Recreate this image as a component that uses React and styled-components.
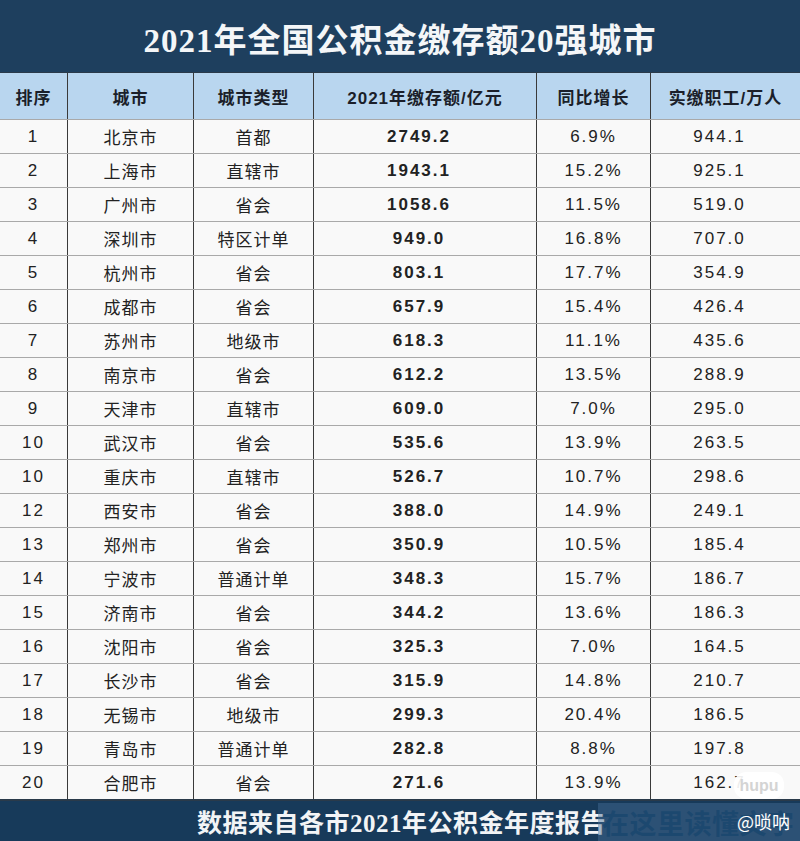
import React from 'react';
import styled, { createGlobalStyle } from 'styled-components';

const rows = [
  ['1', '北京市', '首都', '2749.2', '6.9%', '944.1'],
  ['2', '上海市', '直辖市', '1943.1', '15.2%', '925.1'],
  ['3', '广州市', '省会', '1058.6', '11.5%', '519.0'],
  ['4', '深圳市', '特区计单', '949.0', '16.8%', '707.0'],
  ['5', '杭州市', '省会', '803.1', '17.7%', '354.9'],
  ['6', '成都市', '省会', '657.9', '15.4%', '426.4'],
  ['7', '苏州市', '地级市', '618.3', '11.1%', '435.6'],
  ['8', '南京市', '省会', '612.2', '13.5%', '288.9'],
  ['9', '天津市', '直辖市', '609.0', '7.0%', '295.0'],
  ['10', '武汉市', '省会', '535.6', '13.9%', '263.5'],
  ['10', '重庆市', '直辖市', '526.7', '10.7%', '298.6'],
  ['12', '西安市', '省会', '388.0', '14.9%', '249.1'],
  ['13', '郑州市', '省会', '350.9', '10.5%', '185.4'],
  ['14', '宁波市', '普通计单', '348.3', '15.7%', '186.7'],
  ['15', '济南市', '省会', '344.2', '13.6%', '186.3'],
  ['16', '沈阳市', '省会', '325.3', '7.0%', '164.5'],
  ['17', '长沙市', '省会', '315.9', '14.8%', '210.7'],
  ['18', '无锡市', '地级市', '299.3', '20.4%', '186.5'],
  ['19', '青岛市', '普通计单', '282.8', '8.8%', '197.8'],
  ['20', '合肥市', '省会', '271.6', '13.9%', '162.7'],
];

const heads = ['排序', '城市', '城市类型', '2021年缴存额/亿元', '同比增长', '实缴职工/万人'];

const Global = createGlobalStyle`
  body {
    margin: 0;
    background: #fff;
    font-family: "Liberation Sans", "Noto Sans CJK SC", sans-serif;
  }
`;

const Page = styled.div`
  width: 800px;
  height: 841px;
  display: flex;
  flex-direction: column;
  overflow: hidden;
`;

const Title = styled.div`
  height: 72px;
  background: #1e3f5e;
  color: #f4f6f8;
  display: flex;
  align-items: center;
  justify-content: center;
  font-family: "Liberation Serif", "Noto Sans CJK SC", serif;
  font-size: 33px;
  font-weight: 700;
  letter-spacing: 1px;
  padding-top: 4px;
  box-sizing: border-box;
`;

const Row = styled.div`
  display: grid;
  grid-template-columns: 67px 126px 120px 223px 114px 150px;
  height: ${p => (p.$head ? 47 : 34)}px;
  background: ${p => (p.$head ? '#b9d6ef' : '#f9f9f9')};
  border-top: 1px solid ${p => (p.$head ? '#2a3a4a' : '#a9a9a9')};
  box-sizing: border-box;
`;

const Cell = styled.div`
  display: flex;
  align-items: center;
  justify-content: center;
  border-left: ${p => (p.$first ? 'none' : '1.5px solid #3a3a3a')};
  font-size: 17px;
  font-weight: ${p => (p.$bold ? 700 : 400)};
  color: ${p => (p.$head ? '#1b1f2a' : '#222')};
  letter-spacing: ${p => (p.$num ? '2px' : '1px')};
  padding-right: ${p => p.$shift || 0}px;
`;

const Footer = styled.div`
  position: relative;
  flex: 1;
  background: #173a5a;
  border-top: 2px solid #2a3a4a;
  display: flex;
  align-items: center;
  padding-left: 197px;
  font-family: "Liberation Serif", "Noto Sans CJK SC", serif;
  font-size: 25px;
  font-weight: 700;
  color: #f2f4f6;
  letter-spacing: 0.5px;
`;

const Stamp = styled.div`
  position: absolute;
  left: 598px;
  top: 2px;
  right: 0;
  bottom: 0;
  background: rgba(70, 110, 150, 0.45);
  display: flex;
  align-items: center;
  padding-left: 4px;
  font-family: "Noto Sans CJK SC", sans-serif;
  font-size: 27px;
  font-weight: 700;
  color: rgba(24, 70, 110, 0.8);
  white-space: nowrap;
`;

const Handle = styled.div`
  position: absolute;
  right: 10px;
  top: 50%;
  transform: translateY(-50%);
  font-family: "Noto Sans CJK SC", sans-serif;
  font-size: 18px;
  font-weight: 400;
  color: #fff;
  letter-spacing: 0;
`;

const Hupu = styled.div`
  position: absolute;
  left: 734px;
  top: 772px;
  width: 50px;
  height: 27px;
  border-radius: 12px;
  background: rgba(255, 255, 255, 0.92);
  color: #d4d4d4;
  font-family: "Liberation Sans", sans-serif;
  font-weight: 700;
  font-size: 16px;
  display: flex;
  align-items: center;
  justify-content: center;
`;

const Wrap = styled.div`
  position: relative;
`;

const App = () => (
  <Wrap>
    <Global />
    <Page>
      <Title>2021年全国公积金缴存额20强城市</Title>
      <Row $head>
        {heads.map((h, i) => (
          <Cell key={i} $head $bold $first={i === 0}>{h}</Cell>
        ))}
      </Row>
      {rows.map((r, ri) => (
        <Row key={ri}>
          {r.map((v, i) => (
            <Cell
              key={i}
              $first={i === 0}
              $bold={i === 3}
              $num={i >= 3 || i === 0}
              $shift={i === 3 ? 12 : i === 5 ? 12 : 0}
            >
              {v}
            </Cell>
          ))}
        </Row>
      ))}
      <Footer>
        数据来自各市2021年公积金年度报告
        <Stamp>在这里读懂文字</Stamp>
        <Handle>@唢呐</Handle>
      </Footer>
    </Page>
    <Hupu>hupu</Hupu>
  </Wrap>
);

export default App;
